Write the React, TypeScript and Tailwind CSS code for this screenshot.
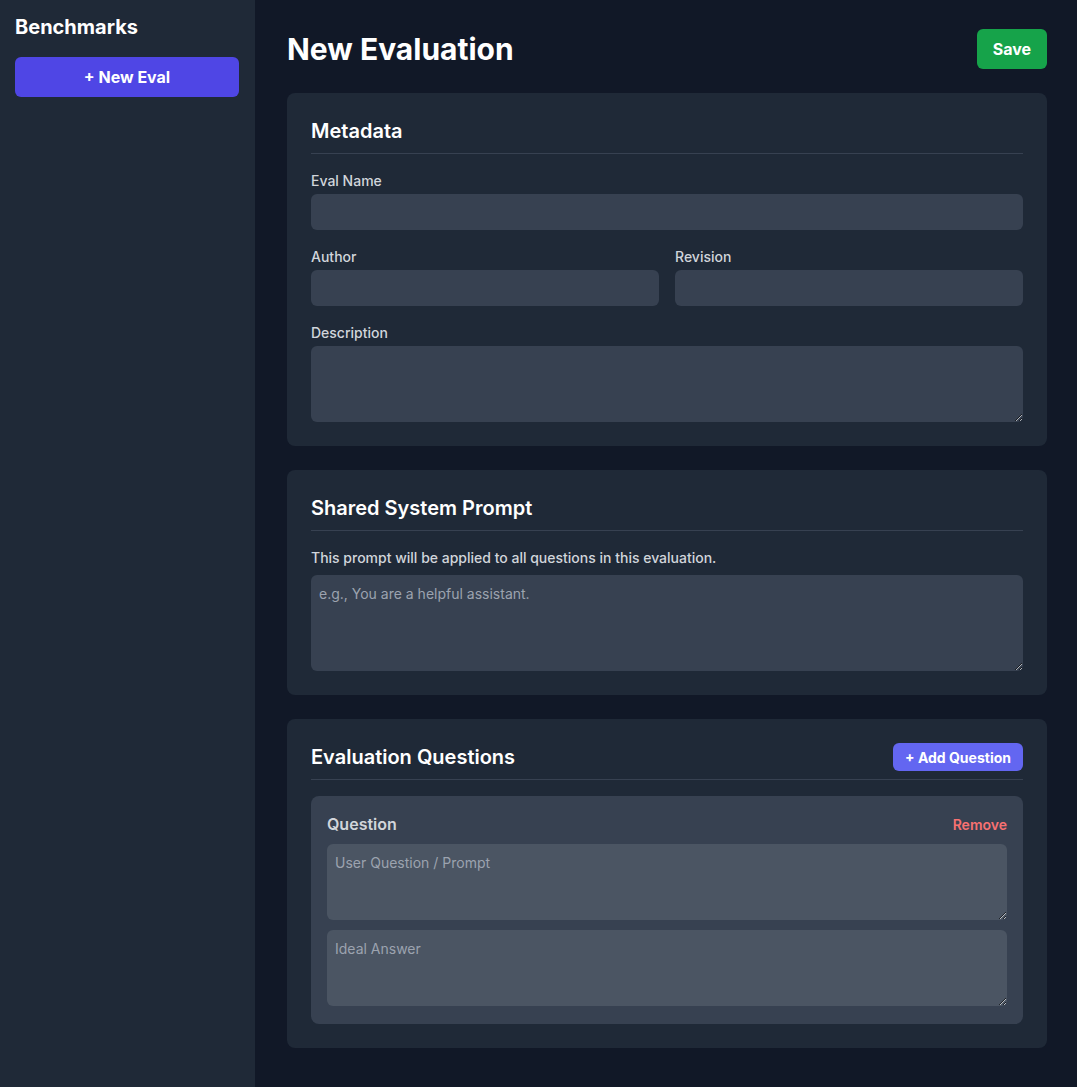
import React from "react";

const inputCls =
  "block w-full h-9 rounded-md bg-[#374151] px-2 text-sm text-white outline-none [color-scheme:dark]";
const taCls =
  "block w-full rounded-md bg-[#374151] px-2 pt-[9px] pb-2 text-sm text-white placeholder:text-[#9ca3af] outline-none [color-scheme:dark]";

function Label({ children }: { children: React.ReactNode }) {
  return (
    <label className="block text-sm font-medium text-[#d1d5db] pt-px mb-[3px] leading-5">
      {children}
    </label>
  );
}

export default function App() {
  return (
    <div
      className="flex min-h-[1087px] bg-[#111827] text-white"
      style={{ fontFamily: "Inter, 'Noto Sans', sans-serif" }}
    >
      <aside className="w-[255px] shrink-0 bg-[#1f2937] pl-[15px] pr-4 pt-[13px]">
        <h2 className="text-xl font-bold leading-7 mb-4">Benchmarks</h2>
        <button className="w-full h-10 rounded-md bg-[#4f46e5] text-base font-bold">
          + New Eval
        </button>
      </aside>
      <main className="flex-1 pl-8 pr-[30px] pt-[29px] pb-8">
        <div className="flex items-center justify-between mb-6 h-10">
          <h1 className="text-3xl font-bold leading-9">New Evaluation</h1>
          <button className="h-10 px-4 rounded-md bg-[#16a34a] text-base font-bold">
            Save
          </button>
        </div>
        <div className="flex flex-col gap-6">
          <section className="rounded-lg bg-[#1f2937] p-6">
            <h3 className="text-xl font-semibold leading-7 pb-2 border-b border-[#374151] mb-4">
              Metadata
            </h3>
            <div className="flex flex-col gap-4">
              <div>
                <Label>Eval Name</Label>
                <input className={inputCls} />
              </div>
              <div className="grid grid-cols-2 gap-4">
                <div>
                  <Label>Author</Label>
                  <input className={inputCls} />
                </div>
                <div>
                  <Label>Revision</Label>
                  <input className={inputCls} />
                </div>
              </div>
              <div>
                <Label>Description</Label>
                <textarea className={taCls + " h-[76px]"} />
              </div>
            </div>
          </section>

          <section className="rounded-lg bg-[#1f2937] p-6">
            <h3 className="text-xl font-semibold leading-7 pb-2 border-b border-[#374151] mb-4">
              Shared System Prompt
            </h3>
            <p className="text-sm font-medium text-[#d1d5db] leading-5 pt-px mb-[7px]">
              This prompt will be applied to all questions in this evaluation.
            </p>
            <textarea
              className={taCls + " h-24"}
              placeholder="e.g., You are a helpful assistant."
            />
          </section>

          <section className="rounded-lg bg-[#1f2937] p-6">
            <div className="flex items-center justify-between pb-2 border-b border-[#374151] mb-4">
              <h3 className="text-xl font-semibold leading-7">Evaluation Questions</h3>
              <button className="h-7 px-3 pt-px rounded-md bg-[#6366f1] text-sm font-bold">
                + Add Question
              </button>
            </div>
            <div className="rounded-lg bg-[#374151] px-4 pt-4 pb-[18px]">
              <div className="flex items-center justify-between mb-2 h-6">
                <span className="text-base font-semibold text-[#d1d5db]">Question</span>
                <button className="text-sm font-semibold text-[#f87171] pt-px">Remove</button>
              </div>
              <textarea
                className="block w-full h-[76px] rounded-md bg-[#4b5563] px-2 pt-[9px] pb-2 text-sm text-white placeholder:text-[#9ca3af] outline-none [color-scheme:dark]"
                placeholder="User Question / Prompt"
              />
              <textarea
                className="block w-full h-[76px] mt-[10px] rounded-md bg-[#4b5563] px-2 pt-[9px] pb-2 text-sm text-white placeholder:text-[#9ca3af] outline-none [color-scheme:dark]"
                placeholder="Ideal Answer"
              />
            </div>
          </section>
        </div>
      </main>
    </div>
  );
}
